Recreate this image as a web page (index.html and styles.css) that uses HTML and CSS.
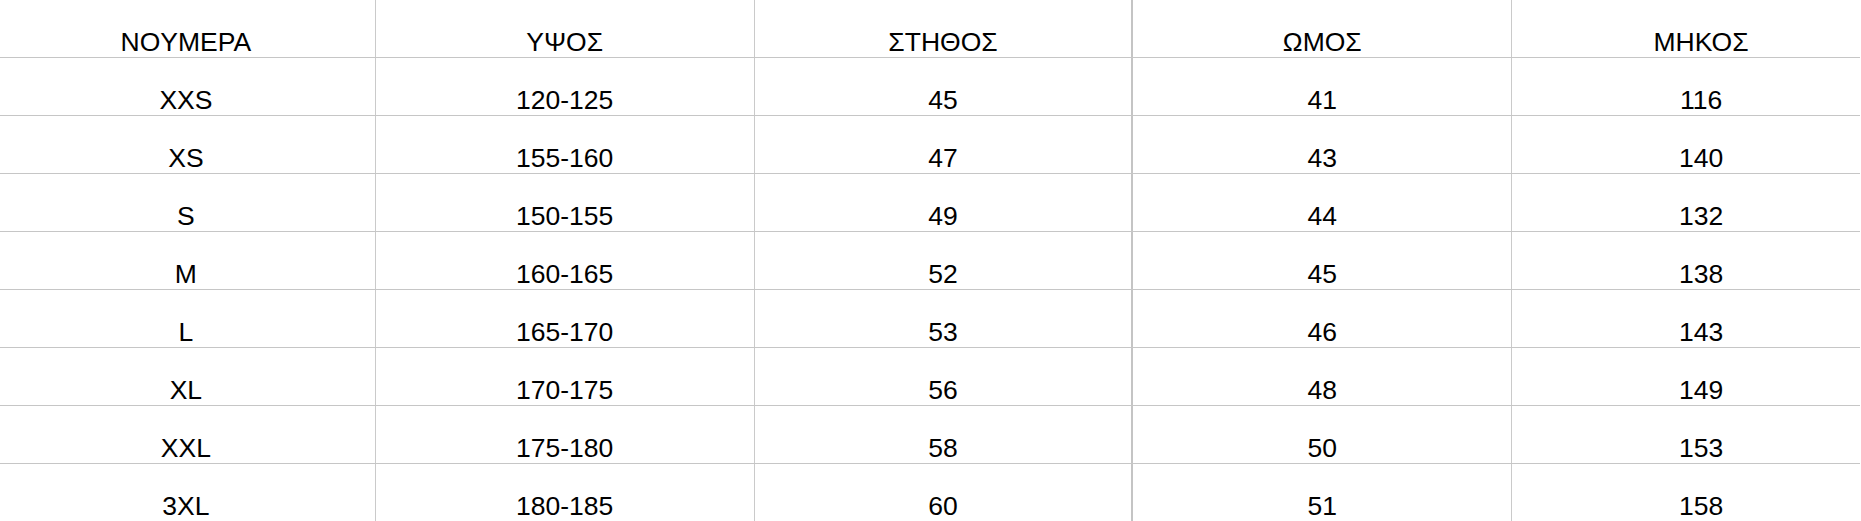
FILE: index.html
```html
<!DOCTYPE html>
<html lang="el">
<head>
<meta charset="utf-8">
<title>Μεγέθη</title>
<link rel="stylesheet" href="styles.css">
</head>
<body>
<div class="sheet">
  <div class="table">
    <div class="row head">
      <div class="cell">NOYMEPA</div><div class="cell">ΥΨΟΣ</div><div class="cell">ΣΤΗΘΟΣ</div><div class="cell">ΩΜΟΣ</div><div class="cell">ΜΗΚΟΣ</div>
    </div>
    <div class="row"><div class="cell">XXS</div><div class="cell">120-125</div><div class="cell">45</div><div class="cell">41</div><div class="cell">116</div></div>
    <div class="row"><div class="cell">XS</div><div class="cell">155-160</div><div class="cell">47</div><div class="cell">43</div><div class="cell">140</div></div>
    <div class="row"><div class="cell">S</div><div class="cell">150-155</div><div class="cell">49</div><div class="cell">44</div><div class="cell">132</div></div>
    <div class="row"><div class="cell">M</div><div class="cell">160-165</div><div class="cell">52</div><div class="cell">45</div><div class="cell">138</div></div>
    <div class="row"><div class="cell">L</div><div class="cell">165-170</div><div class="cell">53</div><div class="cell">46</div><div class="cell">143</div></div>
    <div class="row"><div class="cell">XL</div><div class="cell">170-175</div><div class="cell">56</div><div class="cell">48</div><div class="cell">149</div></div>
    <div class="row"><div class="cell">XXL</div><div class="cell">175-180</div><div class="cell">58</div><div class="cell">50</div><div class="cell">153</div></div>
    <div class="row"><div class="cell">3XL</div><div class="cell">180-185</div><div class="cell">60</div><div class="cell">51</div><div class="cell">158</div></div>
  </div>
</div>
</body>
</html>
```

FILE: styles.css
```css
html, body {
  margin: 0;
  padding: 0;
  background: #ffffff;
}

.sheet {
  width: 1860px;
  height: 521px;
  overflow: hidden;
  font-family: "Liberation Sans", Arial, sans-serif;
  font-size: 26.5px;
  color: #000000;
}

.table {
  margin-left: -3px;
  width: 1894px;
}

.row {
  display: grid;
  grid-template-columns: repeat(5, 378.8px);
  height: 58px;
  box-sizing: border-box;
  border-bottom: 1px solid #c6c6c6;
}

.cell {
  box-sizing: border-box;
  display: flex;
  align-items: flex-end;
  justify-content: center;
  line-height: 30px;
  border-right: 1px solid #cacaca;
  white-space: nowrap;
}

.cell:nth-child(3) {
  border-right: 2px solid #c4c4c4;
}
```
